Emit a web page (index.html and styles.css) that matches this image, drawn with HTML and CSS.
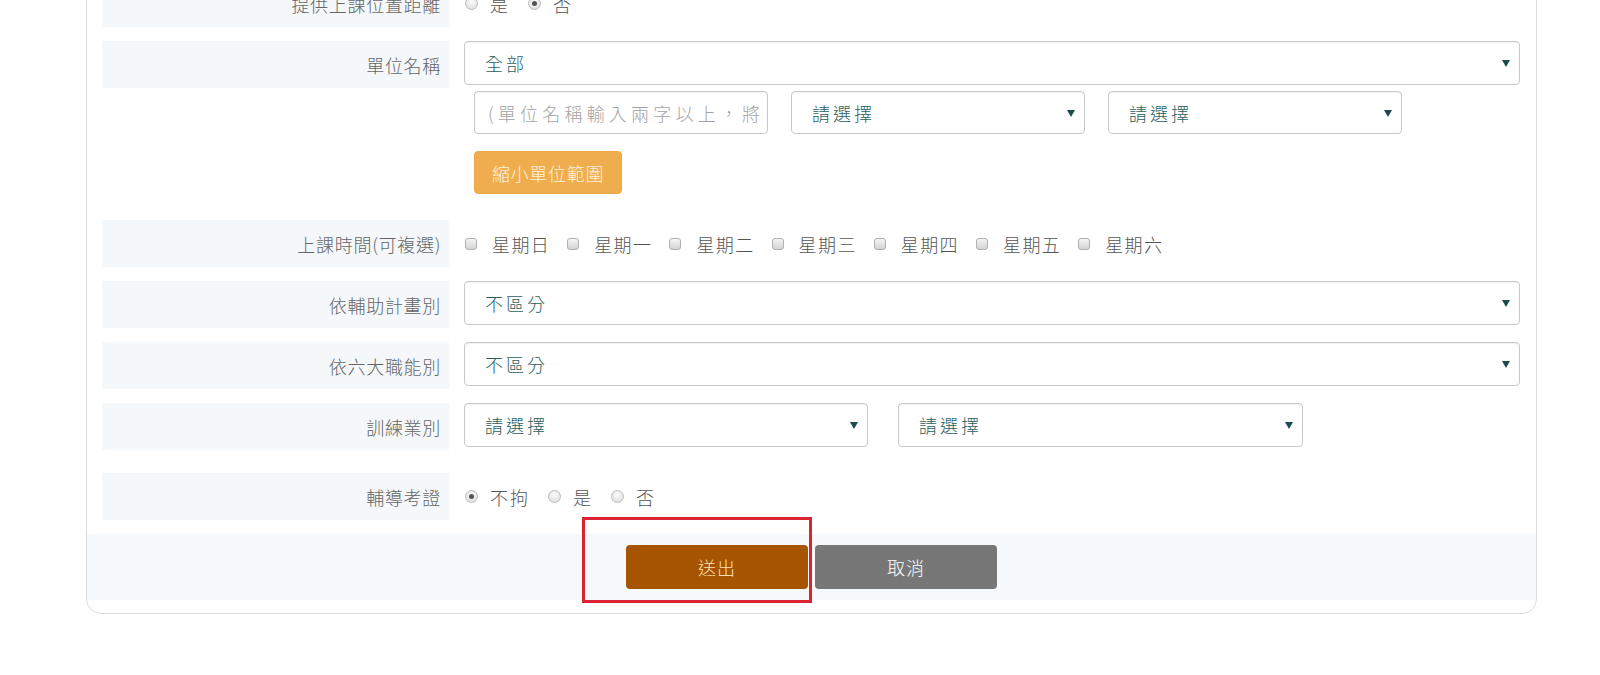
FILE: index.html
```html
<!DOCTYPE html>
<html lang="zh-Hant">
<head>
<meta charset="utf-8">
<title>課程查詢</title>
<link rel="stylesheet" href="styles.css">
</head>
<body>
<form class="card">
  <div class="row">
    <div class="label">提供上課位置距離</div>
    <div class="field choices">
      <label class="opt"><span class="radio"></span>是</label>
      <label class="opt"><span class="radio on"></span>否</label>
    </div>
  </div>

  <div class="row row-unit">
    <div class="label">單位名稱</div>
    <div class="field stack">
      <div class="select wide"><span>全部</span><svg class="caret" viewBox="0 0 8 8"><path d="M0 1h8L4 8z"/></svg></div>
      <div class="subrow">
        <input class="input" type="text" placeholder="(單位名稱輸入兩字以上，將顯示相關單位)">
        <div class="select sub"><span>請選擇</span><svg class="caret" viewBox="0 0 8 8"><path d="M0 1h8L4 8z"/></svg></div>
        <div class="select sub"><span>請選擇</span><svg class="caret" viewBox="0 0 8 8"><path d="M0 1h8L4 8z"/></svg></div>
      </div>
      <div class="subrow"><button type="button" class="btn-warn">縮小單位範圍</button></div>
    </div>
  </div>

  <div class="row">
    <div class="label">上課時間(可複選)</div>
    <div class="field choices days">
      <label class="opt"><span class="box"></span>星期日</label>
      <label class="opt"><span class="box"></span>星期一</label>
      <label class="opt"><span class="box"></span>星期二</label>
      <label class="opt"><span class="box"></span>星期三</label>
      <label class="opt"><span class="box"></span>星期四</label>
      <label class="opt"><span class="box"></span>星期五</label>
      <label class="opt"><span class="box"></span>星期六</label>
    </div>
  </div>

  <div class="row">
    <div class="label">依輔助計畫別</div>
    <div class="field">
      <div class="select wide"><span>不區分</span><svg class="caret" viewBox="0 0 8 8"><path d="M0 1h8L4 8z"/></svg></div>
    </div>
  </div>

  <div class="row">
    <div class="label">依六大職能別</div>
    <div class="field">
      <div class="select wide"><span>不區分</span><svg class="caret" viewBox="0 0 8 8"><path d="M0 1h8L4 8z"/></svg></div>
    </div>
  </div>

  <div class="row row-trade">
    <div class="label">訓練業別</div>
    <div class="field pair">
      <div class="select half1"><span>請選擇</span><svg class="caret" viewBox="0 0 8 8"><path d="M0 1h8L4 8z"/></svg></div>
      <div class="select half2"><span>請選擇</span><svg class="caret" viewBox="0 0 8 8"><path d="M0 1h8L4 8z"/></svg></div>
    </div>
  </div>

  <div class="row">
    <div class="label">輔導考證</div>
    <div class="field choices">
      <label class="opt"><span class="radio on"></span>不拘</label>
      <label class="opt"><span class="radio"></span>是</label>
      <label class="opt"><span class="radio"></span>否</label>
    </div>
  </div>

  <div class="footer">
    <button type="button" class="btn btn-submit">送出</button>
    <button type="button" class="btn btn-cancel">取消</button>
    <div class="highlight"></div>
  </div>
</form>
</body>
</html>
```

FILE: styles.css
```css
html, body {
  margin: 0;
  padding: 0;
  background: #ffffff;
}

body {
  font-family: "Noto Sans CJK TC", "Microsoft JhengHei", "Noto Sans", sans-serif;
  font-size: 18px;
  font-weight: 300;
  color: #555;
  overflow: hidden;
}

.card {
  box-sizing: border-box;
  width: 1451px;
  margin: -41px 0 0 86px;
  padding: 20px 0 13px;
  border: 1px solid #dcdcdc;
  border-radius: 0 0 15px 15px;
  background: #fff;
}

.row {
  display: grid;
  grid-template-columns: 347px 1fr;
  column-gap: 15px;
  margin: 0 16px 14px 15px;
  align-items: start;
}

.row-unit { margin-bottom: 26px; }
.row-trade { margin-bottom: 23px; }

.label {
  height: 47px;
  background: #f4f8fb;
  display: flex;
  align-items: center;
  justify-content: flex-end;
  padding-right: 8px;
  color: #666;
  letter-spacing: 0.7px;
  line-height: 1;
  white-space: nowrap;
}

.field {
  min-height: 47px;
  display: flex;
  align-items: flex-start;
}

.stack {
  flex-direction: column;
  align-items: stretch;
}

.subrow {
  display: flex;
  gap: 23px;
  padding-left: 10px;
  margin-top: 6px;
}

.subrow + .subrow { margin-top: 17px; }

.select {
  box-sizing: border-box;
  height: 44px;
  border: 1px solid #c9c9c9;
  border-radius: 4px;
  box-shadow: inset 0 1px 1px rgba(0,0,0,0.06);
  background: #fff;
  display: flex;
  align-items: center;
  justify-content: space-between;
  padding: 0 9px 0 20px;
  color: #2c5f5f;
  letter-spacing: 3px;
  line-height: 1;
}

.select.wide { width: 100%; }
.select.sub { width: 294px; height: 43px; }
.select.half1 { width: 404px; }
.select.half2 { width: 405px; }

.caret {
  width: 8px;
  height: 8px;
  fill: #1b4b4b;
  flex: none;
}

.pair { gap: 30px; }

.input {
  box-sizing: border-box;
  width: 294px;
  height: 43px;
  border: 1px solid #c9c9c9;
  border-radius: 4px;
  box-shadow: inset 0 1px 1px rgba(0,0,0,0.06);
  padding: 0 3px 0 13px;
  font: inherit;
  letter-spacing: 4.2px;
  color: #555;
  outline: none;
}

.input::placeholder { color: #a3a3a3; }

.btn-warn {
  width: 148px;
  height: 43px;
  border: 1px solid #eea844;
  border-radius: 4px;
  background: #f0ad4e;
  color: #fff3df;
  font: inherit;
  letter-spacing: 0.7px;
  padding: 0;
  line-height: 1;
}

.choices {
  align-items: center;
  padding-left: 1px;
  height: 47px;
  color: #555;
}

.opt {
  display: inline-flex;
  align-items: center;
  gap: 12px;
  margin-right: 18px;
  letter-spacing: 2px;
  line-height: 1;
  white-space: nowrap;
}

.days .opt { gap: 15px; margin-right: 17px; letter-spacing: 1.4px; }

.radio {
  box-sizing: border-box;
  width: 13px;
  height: 13px;
  border-radius: 50%;
  border: 1px solid #bdbdbd;
  background: radial-gradient(circle at 50% 35%, #fbfbfb, #d9d9d9);
  position: relative;
  flex: none;
}

.radio.on::after {
  content: "";
  position: absolute;
  left: 3px;
  top: 3px;
  width: 5px;
  height: 5px;
  border-radius: 50%;
  background: #555;
}

.box {
  box-sizing: border-box;
  width: 12px;
  height: 12px;
  border-radius: 3px;
  border: 1px solid #b0b0b0;
  background: linear-gradient(#f4f4f4, #d4d4d4);
  flex: none;
}

.footer {
  position: relative;
  background: #f5f9fc;
  display: flex;
  justify-content: center;
  gap: 7px;
  padding: 11px 0;
}

.btn {
  width: 182px;
  height: 44px;
  border: none;
  border-radius: 4px;
  font: inherit;
  letter-spacing: 1px;
  line-height: 1;
  padding: 0;
}

.btn-submit {
  background: #a65400;
  color: #fbe1b8;
}

.btn-cancel {
  background: #777777;
  color: #ffffff;
}

.highlight {
  position: absolute;
  left: 495px;
  top: -17px;
  width: 230px;
  height: 86px;
  box-sizing: border-box;
  border: 3px solid #dc2430;
  pointer-events: none;
}
```
